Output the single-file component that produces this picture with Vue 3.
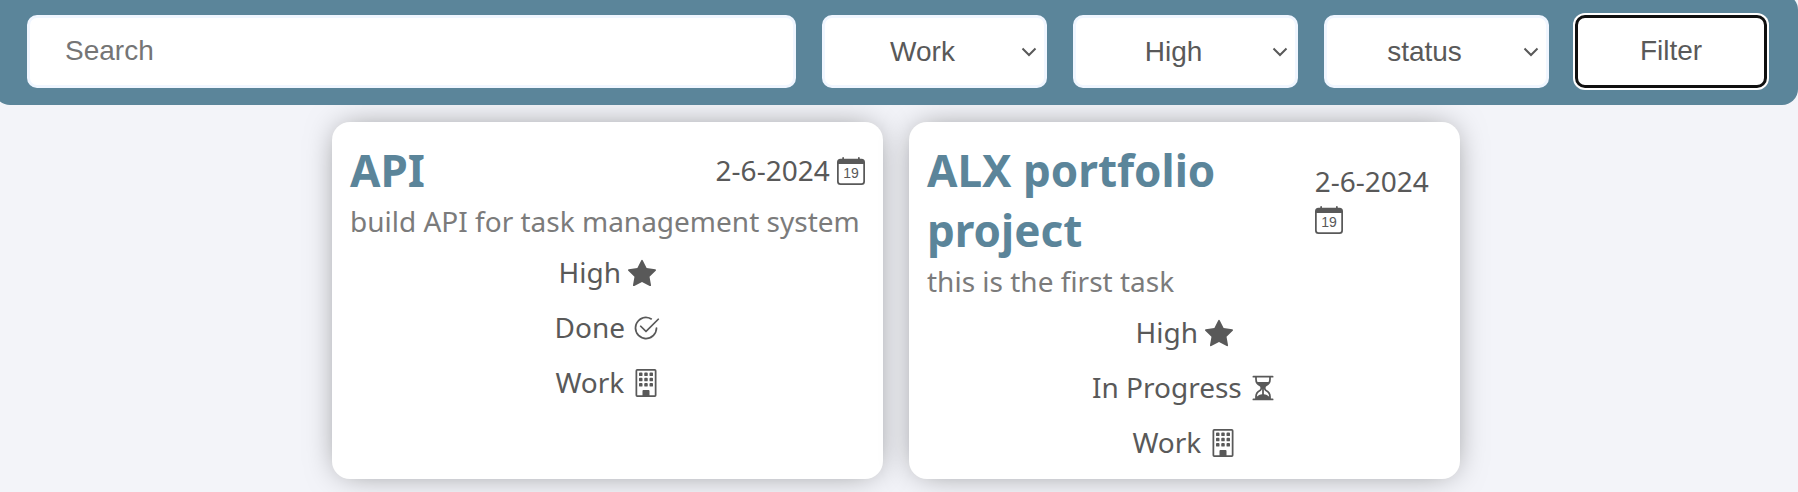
<script setup>
import { ref } from 'vue'

const search = ref('')
const category = ref('Work')
const priority = ref('High')
const status = ref('status')

const filters = [
  { id: 'category', label: 'Category', model: category, options: ['category', 'Work', 'Home'] },
  { id: 'priority', label: 'Priority', model: priority, options: ['priority', 'High', 'Low'] },
  { id: 'status', label: 'Status', model: status, options: ['status', 'Done', 'In Progress'] },
]

const icons = {
  star: 'M3.612 15.443c-.386.198-.824-.149-.746-.592l.83-4.73L.173 6.765c-.329-.314-.158-.888.283-.95l4.898-.696L7.538.792c.197-.39.73-.39.927 0l2.184 4.327 4.898.696c.441.062.612.636.282.95l-3.522 3.356.83 4.73c.078.443-.36.79-.746.592L8 13.187l-4.389 2.256z',
  check: 'M2.5 8a5.5 5.5 0 0 1 8.25-4.764.5.5 0 0 0 .5-.866A6.5 6.5 0 1 0 14.5 8a.5.5 0 0 0-1 0 5.5 5.5 0 1 1-11 0z M15.354 3.354a.5.5 0 0 0-.708-.708L8 9.293 5.354 6.646a.5.5 0 1 0-.708.708l3 3a.5.5 0 0 0 .708 0l7-7z',
  hourglass: 'M2.5 15a.5.5 0 1 1 0-1h1v-1a4.5 4.5 0 0 1 2.557-4.06c.29-.139.443-.377.443-.59v-.7c0-.213-.154-.451-.443-.59A4.5 4.5 0 0 1 3.5 3V2h-1a.5.5 0 0 1 0-1h11a.5.5 0 0 1 0 1h-1v1a4.5 4.5 0 0 1-2.557 4.06c-.29.139-.443.377-.443.59v.7c0 .213.154.451.443.59A4.5 4.5 0 0 1 12.5 13v1h1a.5.5 0 0 1 0 1zm2-13v1c0 .537.12 1.045.337 1.5h6.326c.216-.455.337-.963.337-1.5V2zm3 6.35c0 .701-.478 1.236-1.011 1.492A3.5 3.5 0 0 0 4.5 13s.866-1.299 3-1.48zm1 0v3.17c2.134.181 3 1.48 3 1.48a3.5 3.5 0 0 0-1.989-3.158C8.978 9.586 8.5 9.052 8.5 8.351z',
  building: 'M4 2.5a.5.5 0 0 1 .5-.5h1a.5.5 0 0 1 .5.5v1a.5.5 0 0 1-.5.5h-1a.5.5 0 0 1-.5-.5zm3 0a.5.5 0 0 1 .5-.5h1a.5.5 0 0 1 .5.5v1a.5.5 0 0 1-.5.5h-1a.5.5 0 0 1-.5-.5zm3.5-.5a.5.5 0 0 0-.5.5v1a.5.5 0 0 0 .5.5h1a.5.5 0 0 0 .5-.5v-1a.5.5 0 0 0-.5-.5zM4 5.5a.5.5 0 0 1 .5-.5h1a.5.5 0 0 1 .5.5v1a.5.5 0 0 1-.5.5h-1a.5.5 0 0 1-.5-.5zM7.5 5a.5.5 0 0 0-.5.5v1a.5.5 0 0 0 .5.5h1a.5.5 0 0 0 .5-.5v-1a.5.5 0 0 0-.5-.5zm2.5.5a.5.5 0 0 1 .5-.5h1a.5.5 0 0 1 .5.5v1a.5.5 0 0 1-.5.5h-1a.5.5 0 0 1-.5-.5zM4.5 8a.5.5 0 0 0-.5.5v1a.5.5 0 0 0 .5.5h1a.5.5 0 0 0 .5-.5v-1a.5.5 0 0 0-.5-.5zm2.5.5a.5.5 0 0 1 .5-.5h1a.5.5 0 0 1 .5.5v1a.5.5 0 0 1-.5.5h-1a.5.5 0 0 1-.5-.5zm3.5-.5a.5.5 0 0 0-.5.5v1a.5.5 0 0 0 .5.5h1a.5.5 0 0 0 .5-.5v-1a.5.5 0 0 0-.5-.5z M2 1a1 1 0 0 1 1-1h10a1 1 0 0 1 1 1v14a1 1 0 0 1-1 1H3a1 1 0 0 1-1-1zm11 0H3v14h3v-2.5a.5.5 0 0 1 .5-.5h3a.5.5 0 0 1 .5.5V15h3z',
}

const tasks = [
  {
    title: 'API',
    date: '2-6-2024',
    description: 'build API for task management system',
    details: [
      { text: 'High', icon: 'star' },
      { text: 'Done', icon: 'check' },
      { text: 'Work', icon: 'building' },
    ],
  },
  {
    title: 'ALX portfolio project',
    date: '2-6-2024',
    description: 'this is the first task',
    details: [
      { text: 'High', icon: 'star' },
      { text: 'In Progress', icon: 'hourglass' },
      { text: 'Work', icon: 'building' },
    ],
  },
]
</script>

<template>
  <div class="page">
    <form class="toolbar" @submit.prevent>
      <input v-model="search" class="control search" type="text" placeholder="Search" aria-label="Search" />
      <div v-for="f in filters" :key="f.id" class="picker">
        <select :id="f.id" v-model="f.model.value" class="control select" :aria-label="f.label">
          <option v-for="o in f.options" :key="o">{{ o }}</option>
        </select>
        <svg class="chevron" viewBox="0 0 16 10" aria-hidden="true">
          <path d="M1.5 1.5 8 8l6.5-6.5" />
        </svg>
      </div>
      <button class="control filter" type="submit">Filter</button>
    </form>

    <main class="tasks">
      <article v-for="task in tasks" :key="task.title" class="card">
        <header class="card-head">
          <h2 class="title">{{ task.title }}</h2>
          <span class="date">{{ task.date }}&#32;<svg class="icon" viewBox="0 0 16 16" aria-hidden="true">
            <path d="M3.5 0a.5.5 0 0 1 .5.5V1h8V.5a.5.5 0 0 1 1 0V1h1a2 2 0 0 1 2 2v11a2 2 0 0 1-2 2H2a2 2 0 0 1-2-2V3a2 2 0 0 1 2-2h1V.5a.5.5 0 0 1 .5-.5M1 4v10a1 1 0 0 0 1 1h12a1 1 0 0 0 1-1V4z" />
            <text class="day" x="8" y="12" text-anchor="middle">19</text>
          </svg></span>
        </header>
        <p class="description">{{ task.description }}</p>
        <ul class="details">
          <li v-for="d in task.details" :key="d.text">
            {{ d.text }}&#32;<svg class="icon" viewBox="0 0 16 16" aria-hidden="true"><path :d="icons[d.icon]" /></svg>
          </li>
        </ul>
      </article>
    </main>
  </div>
</template>

<style>
body {
  background: #f3f4f9;
}
</style>

<style scoped>
.page {
  overflow: hidden;
  min-height: 100vh;
  color: #595959;
  font: 28px/38px "Noto Sans", sans-serif;
}

.toolbar {
  position: relative;
  z-index: 1;
  display: flex;
  gap: 26px;
  margin: -6px 0 0 -6px;
  padding: 21px 31px 17px 33px;
  border-radius: 16px;
  background: #5b859a;
}

.control {
  box-sizing: border-box;
  height: 73px;
  margin: 0;
  border: 3px solid #f0f6ff;
  border-radius: 10px;
  background: #fff;
  color: #595959;
  font: 28px/32px "Liberation Sans", Arial, sans-serif;
  outline: none;
}

.search {
  flex: 1;
  min-width: 0;
  padding: 0 35px 2px;
}

.search::placeholder {
  color: #757575;
  opacity: 1;
}

.picker {
  position: relative;
  flex: 0 0 225px;
}

.select {
  width: 100%;
  padding: 0 24px 0 0;
  appearance: none;
  text-align: center;
  text-align-last: center;
}

.chevron {
  position: absolute;
  top: 32px;
  right: 10px;
  width: 16px;
  height: 10px;
  pointer-events: none;
  fill: none;
  stroke: #595959;
  stroke-width: 2;
}

.filter {
  flex: 0 0 192px;
  padding: 0 0 2px;
  border-color: #101010;
  box-shadow: 0 0 0 2px #fff;
}

.tasks {
  display: flex;
  justify-content: center;
  gap: 26px;
  margin-left: -6px;
  padding: 17px 18px 13px;
}

.card {
  box-sizing: border-box;
  flex: 0 1 551px;
  padding: 18px;
  border-radius: 18px;
  background: #fff;
  box-shadow: 0 0 32px -8px rgba(0, 0, 0, 0.5);
}

.card-head {
  display: flex;
  align-items: center;
  justify-content: space-between;
}

.title {
  margin: 0;
  color: #5b859a;
  font-size: 44px;
  font-weight: 700;
  line-height: 60px;
}

.description {
  margin: 2px 0 13px;
  color: #7b7b7b;
}

.details {
  display: grid;
  gap: 17px;
  margin: 0;
  padding: 0;
  list-style: none;
  text-align: center;
}

.icon {
  width: 1em;
  height: 1em;
  vertical-align: -0.125em;
  fill: currentColor;
}

.day {
  font: 8px "Liberation Sans", Arial, sans-serif;
}
</style>
